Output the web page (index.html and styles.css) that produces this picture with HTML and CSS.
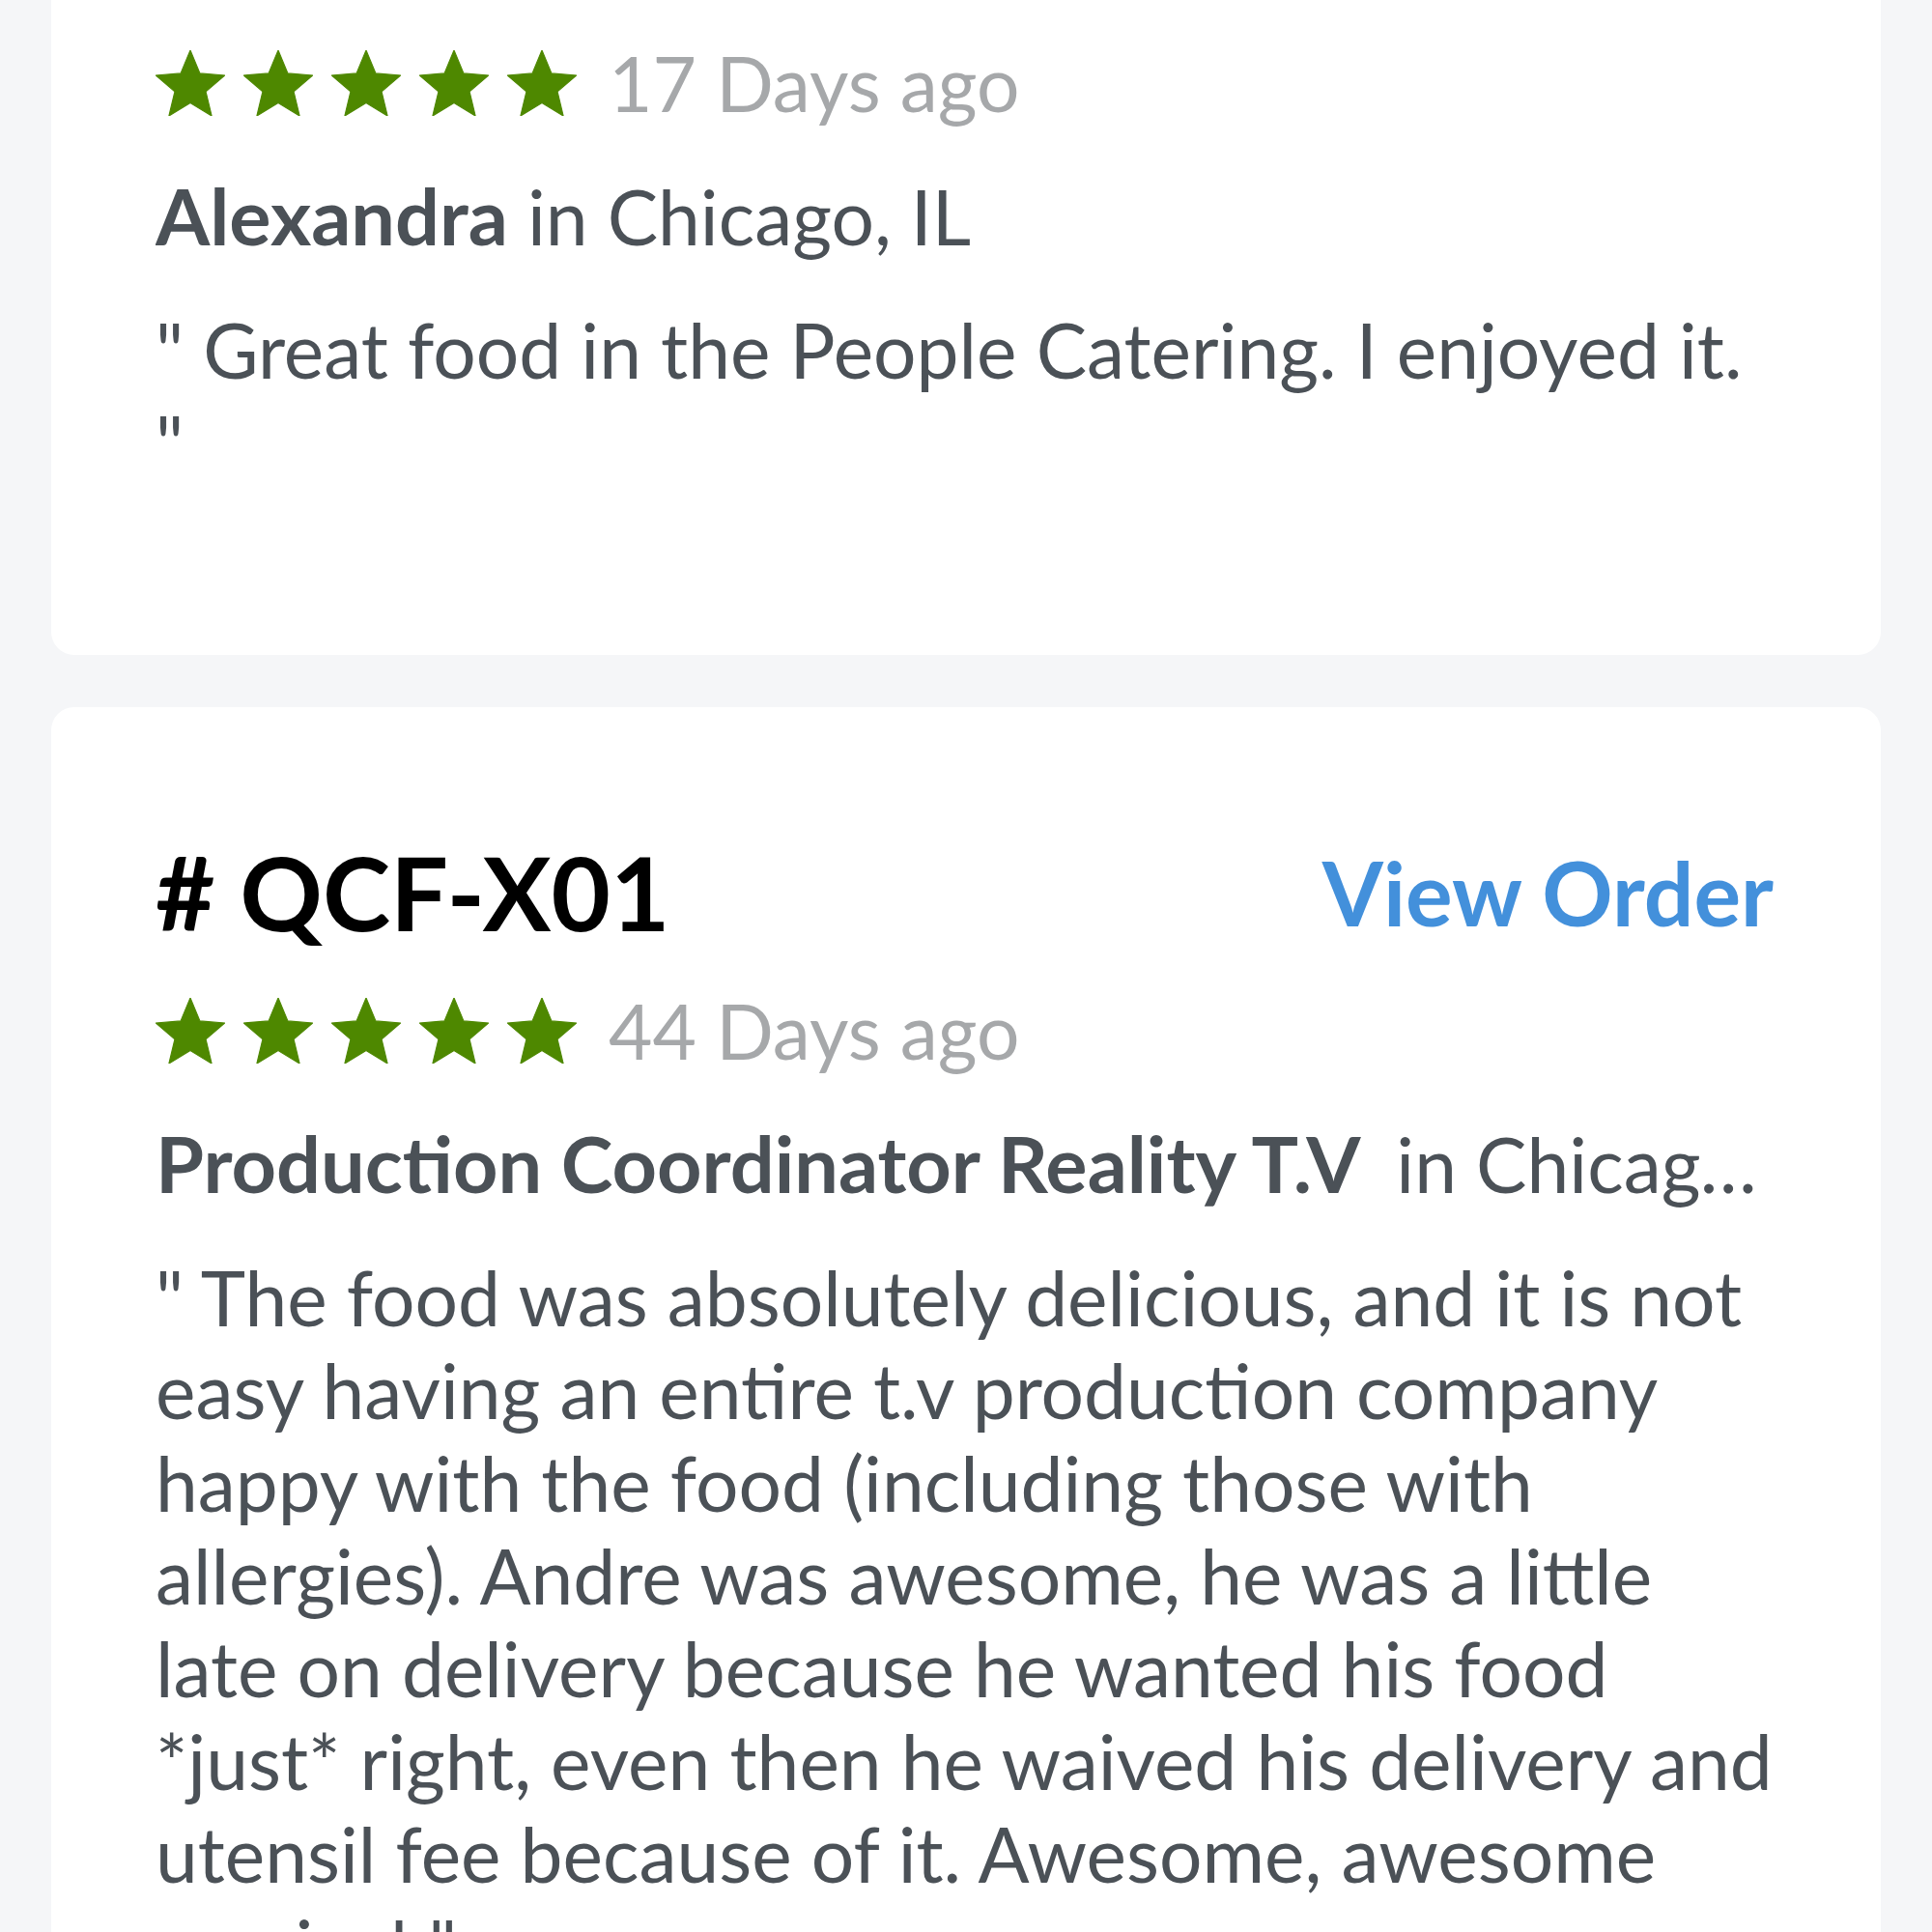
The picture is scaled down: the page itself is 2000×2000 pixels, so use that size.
FILE: index.html
```html
<!DOCTYPE html>
<html lang="en">
<head>
<meta charset="utf-8">
<title>Reviews</title>
<link rel="stylesheet" href="styles.css">
</head>
<body>
<svg class="defs" width="0" height="0" aria-hidden="true">
  <symbol id="star" viewBox="0 0 95.1 90.45">
    <polygon points="47.55,0 60.78,31.8 95.1,34.55 68.95,56.95 76.94,90.45 47.55,72.5 18.16,90.45 26.15,56.95 0,34.55 34.32,31.8"/>
  </symbol>
</svg>
<main class="list">
  <section class="card card--cut">
    <div class="rating">
      <div class="stars">
        <svg class="star"><use href="#star"/></svg>
        <svg class="star"><use href="#star"/></svg>
        <svg class="star"><use href="#star"/></svg>
        <svg class="star"><use href="#star"/></svg>
        <svg class="star"><use href="#star"/></svg>
      </div>
      <span class="ago">17 Days ago</span>
    </div>
    <p class="who"><span class="name">Alexandra</span> in Chicago, IL</p>
    <p class="quote">" Great food in the People Catering. I enjoyed it. "</p>
  </section>
  <section class="card">
    <div class="head">
      <h2 class="order">#&nbsp;QCF-X01</h2>
      <a class="view" href="#">View Order</a>
    </div>
    <div class="rating">
      <div class="stars">
        <svg class="star"><use href="#star"/></svg>
        <svg class="star"><use href="#star"/></svg>
        <svg class="star"><use href="#star"/></svg>
        <svg class="star"><use href="#star"/></svg>
        <svg class="star"><use href="#star"/></svg>
      </div>
      <span class="ago">44 Days ago</span>
    </div>
    <p class="who"><span class="name">Production Coordinator Reality T.V </span> in Chicago, IL</p>
    <p class="quote">" The food was absolutely delicious, and it is not easy having an entire t.v production company happy with the food (including those with allergies). Andre was awesome, he was a little late on delivery because he wanted his food *just* right, even then he waived his delivery and utensil fee because of it. Awesome, awesome service! "</p>
  </section>
</main>
</body>
</html>
```

FILE: styles.css
```css
html, body {
  margin: 0;
  padding: 0;
  background: #f5f6f8;
}

body {
  font-family: Lato, "Open Sans", sans-serif;
  color: #4b5157;
}

.defs {
  position: absolute;
  width: 0;
  height: 0;
  overflow: hidden;
}

.list {
  display: flex;
  flex-direction: column;
  gap: 54px;
  padding: 0 53px;
}

.card {
  background: #ffffff;
  border-radius: 24px;
  padding: 128px 106px 172px 108px;
}

.card--cut {
  border-top-left-radius: 0;
  border-top-right-radius: 0;
  padding-top: 38px;
}

.head {
  display: flex;
  align-items: center;
  justify-content: space-between;
  margin-bottom: 32px;
}

.order {
  margin: 0;
  font-size: 106px;
  line-height: 127px;
  font-weight: 700;
  color: #000000;
}

.view {
  margin-right: 5px;
  font-size: 91px;
  line-height: 109px;
  font-weight: 700;
  color: #4390db;
  text-decoration: none;
}

.rating {
  display: flex;
  align-items: center;
  gap: 33px;
}

.stars {
  display: flex;
  gap: 19px;
}

.star {
  width: 72px;
  height: 68px;
  fill: #4e8800;
  stroke: #4e8800;
  stroke-width: 1.5;
  stroke-linejoin: round;
  display: block;
}

.ago {
  font-size: 78.5px;
  line-height: 96px;
  color: #a6a8aa;
}

.who {
  margin: 41px 0 0;
  font-size: 78.5px;
  line-height: 96px;
  white-space: pre;
  overflow: hidden;
  text-overflow: ellipsis;
}

.name {
  font-size: 81px;
  font-weight: 700;
}

.quote {
  margin: 42px 0 0;
  font-size: 78.5px;
  line-height: 96px;
}
```
